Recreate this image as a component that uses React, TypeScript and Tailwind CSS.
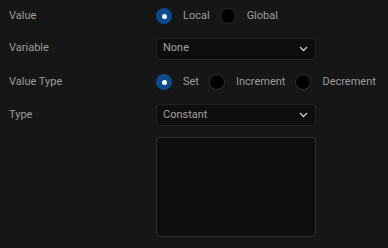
import { useState } from 'react'

type RadioProps = {
  label: string
  checked: boolean
  onClick: () => void
}

function Radio({ label, checked, onClick }: RadioProps) {
  return (
    <button onClick={onClick} className="flex shrink-0 items-center gap-[11px] mr-[10px] last:mr-0 cursor-pointer whitespace-nowrap">
      <span
        className={`w-4 h-4 shrink-0 rounded-full flex items-center justify-center ${
          checked ? 'bg-[#0b4a8b]' : 'bg-black border border-[#2e2e2e]'
        }`}
      >
        {checked && <span className="w-[5px] h-[5px] rounded-full bg-white" />}
      </span>
      <span className="text-[11px] text-[#9c9c9c]">{label}</span>
    </button>
  )
}

function Select({ value }: { value: string }) {
  return (
    <div className="w-[160px] h-[22px] flex items-center justify-between pl-[6px] pr-[7px] rounded-[3px] bg-[#0e0e0e] border border-[#222]">
      <span className="text-[11px] text-[#a0a0a0]">{value}</span>
      <svg width="9" height="6" viewBox="0 0 9 6" fill="none">
        <path d="M1 1l3.5 3.5L8 1" stroke="#cfcfcf" strokeWidth="1.3" />
      </svg>
    </div>
  )
}

export default function App() {
  const [scope, setScope] = useState('Local')
  const [valueType, setValueType] = useState('Set')

  return (
    <div className="w-[388px] h-[248px] bg-[#161616] pl-[9px] overflow-hidden" style={{ fontFamily: 'Roboto, "Liberation Sans", sans-serif' }}>
      <div className="flex items-center h-[32px]">
        <div className="w-[147px] shrink-0 text-[11px] text-[#9c9c9c]">Value</div>
        <div className="flex items-center">
          {['Local', 'Global'].map((s) => (
            <Radio key={s} label={s} checked={scope === s} onClick={() => setScope(s)} />
          ))}
        </div>
      </div>
      <div className="flex items-center h-[33px]">
        <div className="w-[147px] shrink-0 text-[11px] text-[#9c9c9c]">Variable</div>
        <Select value="None" />
      </div>
      <div className="flex items-center h-[34px]">
        <div className="w-[147px] shrink-0 text-[11px] text-[#9c9c9c]">Value Type</div>
        <div className="flex items-center">
          {['Set', 'Increment', 'Decrement'].map((s) => (
            <Radio key={s} label={s} checked={valueType === s} onClick={() => setValueType(s)} />
          ))}
        </div>
      </div>
      <div className="flex items-center h-[32px]">
        <div className="w-[147px] shrink-0 text-[11px] text-[#9c9c9c]">Type</div>
        <Select value="Constant" />
      </div>
      <div className="flex mt-[6px]">
        <div className="w-[147px] shrink-0" />
        <textarea className="w-[160px] h-[100px] rounded-[4px] bg-[#0e0e0e] border border-[#2f2f2f] resize-none outline-none" />
      </div>
    </div>
  )
}
